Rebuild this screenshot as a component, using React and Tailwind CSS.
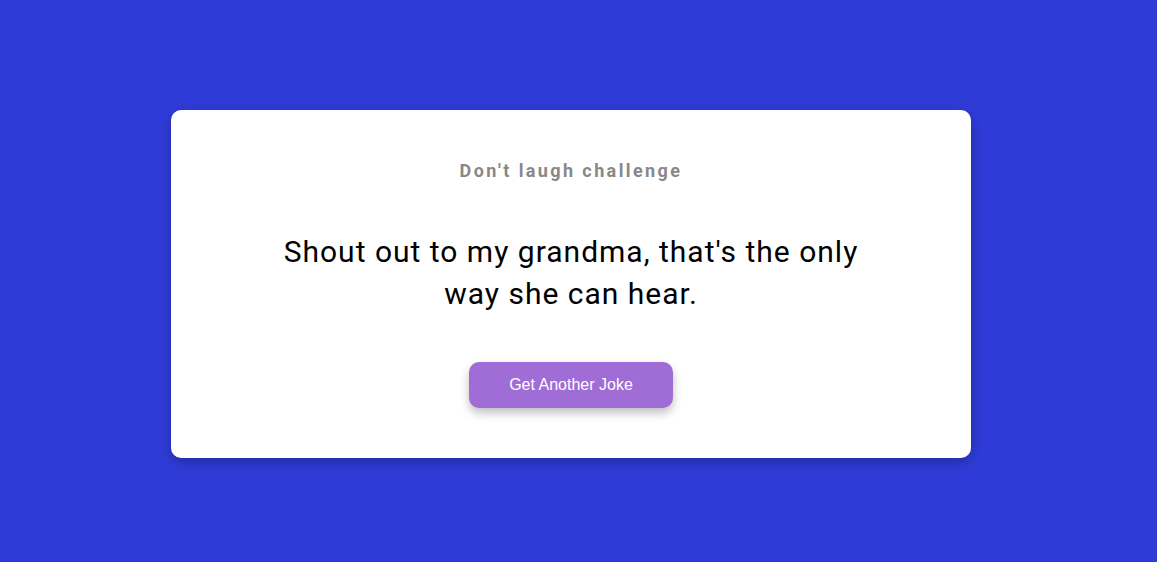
import React from 'react';

export default function App() {
  return (
    <div className="min-h-[562px] w-full bg-[#2f3bd6] flex justify-center items-start pt-[110px] pr-[15px]">
      <div className="w-[800px] bg-white rounded-[10px] shadow-[0_4px_12px_rgba(0,0,0,0.25)] flex flex-col items-center pt-[47px] pb-[50px]">
        <h1 className="font-['Roboto',sans-serif] font-bold text-[18px] leading-[27px] tracking-[2.4px] text-[#888888]">
          Don't laugh challenge
        </h1>
        <p className="mt-[47px] w-[600px] text-center font-['Roboto',sans-serif] text-[30px] leading-[42px] tracking-[1px] text-black">
          Shout out to my grandma, that's the only way she can hear.
        </p>
        <button className="mt-[47px] w-[204px] h-[46px] rounded-[10px] bg-[#a06cd5] text-white font-['Liberation_Sans',Arial,sans-serif] text-[16px] shadow-[0_5px_10px_rgba(0,0,0,0.25)]">
          Get Another Joke
        </button>
      </div>
    </div>
  );
}
